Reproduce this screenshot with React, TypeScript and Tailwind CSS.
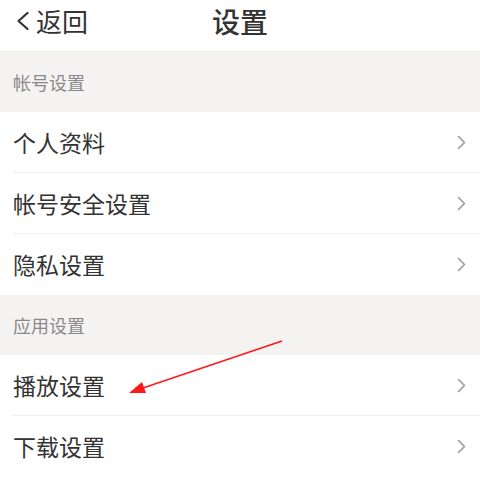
import React from "react";

const font = { fontFamily: '"Noto Sans CJK SC", "Noto Sans", sans-serif' };

function Chevron() {
  return (
    <svg width="9" height="15" viewBox="0 0 9 15" className="shrink-0">
      <path d="M1.5 1.5 L7.5 7.5 L1.5 13.5" fill="none" stroke="#9a9a9a" strokeWidth="1.6" strokeLinecap="round" strokeLinejoin="round" />
    </svg>
  );
}

function Section({ title }: { title: string }) {
  return (
    <div className="h-[60px] bg-[#f4f3f2] flex items-center pl-[13px] text-[18px] text-[#8a8a8a]">
      {title}
    </div>
  );
}

function Row({ label, last }: { label: string; last?: boolean }) {
  return (
    <div className="pl-[13px] bg-white">
      <div className={`h-[61px] flex items-center justify-between pr-[14px] ${last ? "" : "border-b border-[#eeeeee]"}`}>
        <span className="text-[23px] text-[#333333] leading-none">{label}</span>
        <Chevron />
      </div>
    </div>
  );
}

export default function App() {
  return (
    <div className="w-[480px] h-[477px] bg-white overflow-hidden relative" style={font}>
      <div className="h-[52px] relative flex items-center pb-[10px] border-b border-[#ececec]">
        <div className="flex items-center pl-[16px] gap-[7px]">
          <svg width="13" height="20" viewBox="0 0 13 20">
            <path d="M11.5 2 L2.5 10 L11.5 18" fill="none" stroke="#333" strokeWidth="2.2" strokeLinecap="round" strokeLinejoin="round" />
          </svg>
          <span className="text-[26px] text-[#333333] leading-none">返回</span>
        </div>
        <div className="absolute left-0 right-0 top-0 h-[42px] flex items-center justify-center pointer-events-none">
          <span className="text-[28px] text-[#333333] font-medium leading-none">设置</span>
        </div>
      </div>
      <Section title="帐号设置" />
      <Row label="个人资料" />
      <Row label="帐号安全设置" />
      <Row label="隐私设置" last />
      <Section title="应用设置" />
      <Row label="播放设置" />
      <Row label="下载设置" last />
      <svg className="absolute left-0 top-0 pointer-events-none" width="480" height="477">
        <line x1="282" y1="341" x2="140" y2="389" stroke="#ff1a1a" strokeWidth="1.8" />
        <polygon points="129,393 142,382 146,393" fill="#ff1a1a" />
      </svg>
    </div>
  );
}
